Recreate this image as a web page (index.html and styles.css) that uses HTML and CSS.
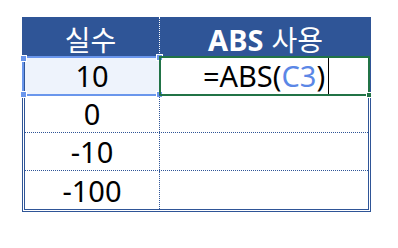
FILE: index.html
```html
<!DOCTYPE html>
<html lang="ko">
<head>
<meta charset="utf-8">
<link rel="stylesheet" href="styles.css">
</head>
<body>
<div class="sheet">
  <div class="head">
    <div class="hcell hc1">실수</div>
    <div class="hcell hc2"><b class="en">ABS</b> 사용</div>
  </div>
  <div class="body">
    <div class="row">
      <div class="cell c1 sel">10
        <div class="selbox">
          <span class="h tl"></span><span class="h tr"></span><span class="h bl"></span><span class="h br"></span>
        </div>
      </div>
      <div class="cell c2 edit">=ABS(<span class="ref">C3</span>)<span class="caret"></span>
        <div class="editbox"><span class="gh"></span></div>
      </div>
    </div>
    <div class="row">
      <div class="cell c1">0</div>
      <div class="cell c2"></div>
    </div>
    <div class="row">
      <div class="cell c1">-10</div>
      <div class="cell c2"></div>
    </div>
    <div class="row last">
      <div class="cell c1">-100</div>
      <div class="cell c2"></div>
    </div>
  </div>
</div>
</body>
</html>
```
FILE: styles.css
```css
html, body {
  margin: 0;
  padding: 0;
  background: #fff;
}
.sheet {
  margin: 17px 0 0 22px;
  width: 349px;
  font-family: "Noto Sans", "Noto Sans CJK KR", sans-serif;
}
.head {
  display: grid;
  grid-template-columns: 138px 211px;
  height: 40px;
  background: #2F5597;
  color: #fff;
}
.hcell {
  display: flex;
  align-items: center;
  justify-content: center;
  font-size: 28px;
  line-height: 1;
  padding-top: 4px;
  box-sizing: border-box;
  font-family: "Noto Sans CJK KR", sans-serif;
}
.hc1 {
  border-right: 1px dotted #ffffff;
}
.hcell .en {
  font-family: "Noto Sans", sans-serif;
  font-weight: 700;
  font-size: 29px;
  margin-right: 8px;
}
.body {
  border: 3px double #2F5597;
  border-top: none;
  box-sizing: border-box;
  width: 349px;
}
.row {
  display: grid;
  grid-template-columns: 135px 1fr;
  height: 38px;
  box-sizing: border-box;
  border-bottom: 1px dotted #2F5597;
}
.row.last {
  border-bottom: none;
}
.cell {
  position: relative;
  display: flex;
  align-items: center;
  justify-content: center;
  font-size: 29px;
  color: #000;
  line-height: 1;
}
.c1 {
  border-right: 1px dotted #2F5597;
}
.sel {
  background: #EEF3FC;
}
.selbox {
  position: absolute;
  left: -3px;
  top: -1px;
  width: 139px;
  height: 40px;
  box-sizing: border-box;
  border: 2px solid #6A96EC;
}
.h {
  position: absolute;
  width: 5px;
  height: 5px;
  background: #6A96EC;
  border: 1px solid #fff;
}
.h.tl { left: -4px; top: -3px; }
.h.tr { right: -4px; top: -4px; }
.h.bl { left: -4px; bottom: -4px; }
.h.br { right: -4px; bottom: -4px; }
.edit {
  padding-left: 4px;
}
.ref {
  color: #5B87E6;
}
.caret {
  display: inline-block;
  width: 1px;
  height: 36px;
  background: #000;
  margin-left: 3px;
}
.editbox {
  position: absolute;
  left: -1px;
  top: -1px;
  right: -2px;
  bottom: -2px;
  border: 2px solid #217346;
}
.gh {
  position: absolute;
  right: -4px;
  bottom: -4px;
  width: 4px;
  height: 4px;
  background: #217346;
  border: 1px solid #fff;
}
```
